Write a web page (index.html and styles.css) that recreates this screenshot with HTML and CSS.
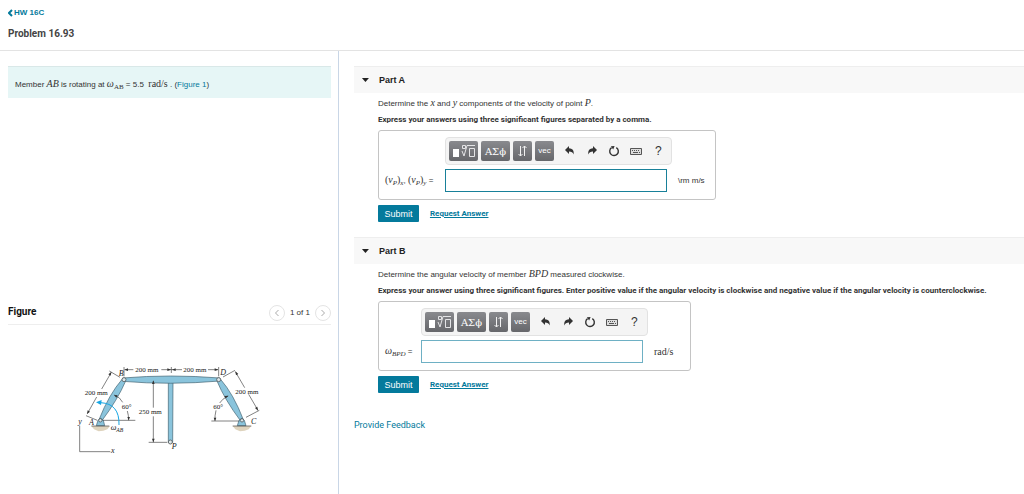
FILE: index.html
```html
<!DOCTYPE html>
<html lang="en">
<head>
<meta charset="utf-8">
<title>Problem 16.93</title>
<link rel="stylesheet" href="styles.css">
</head>
<body>
<svg class="defs" aria-hidden="true">
  <symbol id="i-root" viewBox="0 0 29 20"><path fill="#fff" d="M4 8h6v8H4z"/><path fill="none" stroke="#e4e4e6" d="M13.500 4.500h3v3h-3zM13 10l2 5 3-10.500h8M20.500 7.500h5v8h-5z"/></symbol>
  <symbol id="i-updown" viewBox="0 0 19 20"><path fill="none" stroke="#f2f2f2" d="M7.500 5v10M5.500 13l2 2 2-2M11.500 15V5M9.500 7l2-2 2 2"/></symbol>
  <symbol id="i-undo" viewBox="0 0 10 10"><path fill="#333" d="M4 0v2.300c3.200.1 5.300 2.100 4.600 6.200C7.800 6.300 6.500 5.600 4 5.600V8L0 4z"/></symbol>
  <symbol id="i-redo" viewBox="0 0 10 10"><path fill="#333" d="M6 0v2.300C2.800 2.400.7 4.400 1.400 8.500 2.200 6.300 3.500 5.600 6 5.600V8l4-4z"/></symbol>
  <symbol id="i-reset" viewBox="0 0 12 12"><path fill="none" stroke="#333" stroke-width="1.400" d="M8.300 2.600A4.300 4.300 0 1 1 3.600 2.700"/><path fill="#333" d="M2.800 1.300L6.600 1 5.200 4.500z"/></symbol>
  <symbol id="i-keys" viewBox="0 0 12 8"><path fill="#ddd" stroke="#555" d="M.5 1.500h11v6H.5z"/><path stroke="#555" stroke-dasharray="1 1" d="M2 3.500h8M3 5.500h1M9 5.500h1"/><path stroke="#555" d="M4 5.500h4"/></symbol>
</svg>
<header class="page-head">
  <a class="back" href="#"><svg class="back-icon" viewBox="0 0 5 8"><path d="M4 1L1 4l3 3"/></svg>HW 16C</a>
  <h1 class="title">Problem 16.93</h1>
</header>
<main class="layout">
  <section class="left">
    <p class="intro">Member <i class="math">AB</i> is rotating at <i class="math">ω</i><sub class="math">AB</sub> = 5.5 &nbsp;<span class="math">rad/s</span> . (<a href="#figure">Figure 1</a>)</p>
    <div class="figure-head" id="figure">
      <h2 class="figure-title">Figure</h2>
      <div class="pager">
        <button class="round" aria-label="Previous figure"><svg viewBox="0 0 6 8"><path d="M4.500 1l-3 3 3 3"/></svg></button>
        <span>1 of 1</span>
        <button class="round" aria-label="Next figure"><svg viewBox="0 0 6 8"><path d="M1.500 1l3 3-3 3"/></svg></button>
      </div>
    </div>
    <svg class="drawing" viewBox="0 0 600 330" role="img" aria-label="Linkage A B P D C">
      <g class="ground"><path d="M64 213h56l-8 10-12 4-14 2-14-6z"/><path d="M488 213h56l-8 10-12 4-14 2-14-6z"/></g>
      <g class="member">
        <path d="M295 80h14l-1 182q-7 8-13 0z"/>
        <path d="M158 69Q300 57 450 69v9Q300 91 158 79z"/>
        <path d="M157 72Q117 118 87 194l8 4Q143 134 167 78z"/>
        <path d="M451 72q40 46 69 122l-8 4q-48-64-71-120z"/>
        <path d="M84 196l8-6 8 6 4 16H79zM507 196l8-6 8 6 5 16h-26z"/>
      </g>
      <g class="pin"><circle cx="162" cy="74" r="6"/><circle cx="446" cy="74" r="6"/><circle cx="91" cy="196" r="5"/><circle cx="516" cy="196" r="5"/><circle cx="301" cy="261" r="6"/></g>
      <g class="dim">
        <path d="M64 213h54M488 213h56M162 36v28M304 36v18M446 36v28M164 44h26M274 44h62M414 44h30M118 48l32 19M48 182l34 14M124 52L95 102M80 126L52 176M459 66l36-20M528 187l40-21M496 50l28 48M536 118l28 48M250 78v80M250 184v78M236 262h56M98 196h98M424 198h84M133 120q18 7 25 22M172 168q4 13 4 28M474 123q-18 9-25 21M438 166q-4 16-3 32M29 212v78h92"/>
        <path class="tip" d="M163 44l11-4v8zM303 44l-11-4v8zM306 44l11-4v8zM445 44l-11-4v8zM124 51l-9 7 7 4zM51 177l2-11 7 4zM496 49l9 8-7 4zM564 167l-9-8 7-4zM250 76l-4 11h8zM250 262l-4-11h8zM132 120l11 1-4 7zM176 196l-4-10h8zM476 122l-9 8-4-7zM435 198l-4-10h8z"/>
      </g>
      <path class="spin" d="M147 210q2-64-55-67"/><path class="spin-tip" d="M78 142l17-7-2 15z"/>
      <g class="label">
        <text x="196" y="51">200 mm</text><text x="340" y="51">200 mm</text><text x="44" y="119">200 mm</text><text x="496" y="117">200 mm</text><text x="206" y="177">250 mm</text><text x="155" y="163">60°</text><text x="430" y="162">60°</text>
        <g class="var"><text x="146" y="63">B</text><text x="451" y="61">D</text><text x="57" y="210">A</text><text x="543" y="208">C</text><text x="305" y="281">P</text><text x="25" y="206">y</text><text x="123" y="295">x</text><text x="122" y="225">ω<tspan class="small" dy="5">AB</tspan></text></g>
      </g>
    </svg>
  </section>
  <section class="right">
    <article class="part">
      <header class="part-head"><button class="toggle" aria-label="Collapse Part A"></button><h2>Part A</h2></header>
      <div class="part-body">
        <p class="line">Determine the <i class="math">x</i> and <i class="math">y</i> components of the velocity of point <i class="math">P</i>.</p>
        <p class="line strong">Express your answers using three significant figures separated by a comma.</p>
        <div class="answer">
          <label class="lhs wide" for="ans-a"><span class="math">(<i>v</i><sub><i>P</i></sub>)<sub><i>x</i></sub></span>, <span class="math">(<i>v</i><sub><i>P</i></sub>)<sub><i>y</i></sub></span> =</label>
          <div class="entry">
            <div class="toolbar">
              <button class="tool large" aria-label="Templates"><svg viewBox="0 0 29 20"><use href="#i-root"/></svg></button>
              <button class="tool large greek">ΑΣϕ</button>
              <button class="tool" aria-label="Subscripts"><svg viewBox="0 0 19 20"><use href="#i-updown"/></svg></button>
              <button class="tool">vec</button>
              <button class="plain" aria-label="Undo"><svg class="arrow"><use href="#i-undo"/></svg></button>
              <button class="plain" aria-label="Redo"><svg class="arrow"><use href="#i-redo"/></svg></button>
              <button class="plain" aria-label="Reset"><svg class="reset"><use href="#i-reset"/></svg></button>
              <button class="plain" aria-label="Keyboard shortcuts"><svg class="keys"><use href="#i-keys"/></svg></button>
              <button class="plain">?</button>
            </div>
            <input class="field active" id="ans-a" type="text">
          </div>
          <span class="unit">\rm m/s</span>
        </div>
        <div class="actions"><button class="submit">Submit</button><a class="request" href="#">Request Answer</a></div>
      </div>
    </article>
    <article class="part">
      <header class="part-head"><button class="toggle" aria-label="Collapse Part B"></button><h2>Part B</h2></header>
      <div class="part-body">
        <p class="line">Determine the angular velocity of member <i class="math">BPD</i> measured clockwise.</p>
        <p class="line strong">Express your answer using three significant figures. Enter positive value if the angular velocity is clockwise and negative value if the angular velocity is counterclockwise.</p>
        <div class="answer">
          <label class="lhs" for="ans-b"><i class="math">ω<sub>BPD</sub></i> =</label>
          <div class="entry">
            <div class="toolbar">
              <button class="tool large" aria-label="Templates"><svg viewBox="0 0 29 20"><use href="#i-root"/></svg></button>
              <button class="tool large greek">ΑΣϕ</button>
              <button class="tool" aria-label="Subscripts"><svg viewBox="0 0 19 20"><use href="#i-updown"/></svg></button>
              <button class="tool">vec</button>
              <button class="plain" aria-label="Undo"><svg class="arrow"><use href="#i-undo"/></svg></button>
              <button class="plain" aria-label="Redo"><svg class="arrow"><use href="#i-redo"/></svg></button>
              <button class="plain" aria-label="Reset"><svg class="reset"><use href="#i-reset"/></svg></button>
              <button class="plain" aria-label="Keyboard shortcuts"><svg class="keys"><use href="#i-keys"/></svg></button>
              <button class="plain">?</button>
            </div>
            <input class="field" id="ans-b" type="text">
          </div>
          <span class="unit math">rad/s</span>
        </div>
        <div class="actions"><button class="submit">Submit</button><a class="request" href="#">Request Answer</a></div>
      </div>
    </article>
    <a class="feedback" href="#">Provide Feedback</a>
  </section>
</main>
</body>
</html>
```
FILE: styles.css
```css
* { box-sizing: border-box; }
body { margin: 0; min-height: 100vh; display: flex; flex-direction: column; background: #fff; color: #333; font: 8px/16px "Liberation Sans", Arial, sans-serif; }
h1, h2, p { margin: 0; }
button { padding: 0; border: 0; background: none; color: inherit; font: inherit; display: flex; align-items: center; justify-content: center; }
a { color: #047a9c; text-decoration: none; }
sub { font-size: 7px; line-height: 0; vertical-align: -2px; }
.defs { position: absolute; width: 0; height: 0; }
.math { font-family: "Liberation Serif", "Times New Roman", serif; font-size: 10px; line-height: 0; }
sub.math, .math sub { font-size: 7px; }

.page-head { padding: 5px 8px 8px; border-bottom: 1px solid #e3e3e3; }
.back { display: flex; align-items: center; gap: 1px; font-weight: bold; }
.back-icon { width: 5px; height: 8px; fill: none; stroke: #047a9c; stroke-width: 2; }
.title { margin-top: 5px; font: bold 10px/16px Roboto, sans-serif; color: #444; }

.layout { flex: 1; display: grid; grid-template-columns: 33.1% 1fr; }
.left { padding: 15px 7px 0 8px; border-right: 1px solid #c9d6e6; }
.intro { padding: 10px 7px 5px; border-top: 1px solid #d9e8e8; background: #e6f6f6; }
.figure-head { display: flex; justify-content: space-between; margin-top: 204px; height: 23px; border-bottom: 1px solid #eee; }
.figure-title { font: bold 10px/20px Roboto, sans-serif; color: #111; }
.pager { display: flex; align-items: center; gap: 5px; }
.round { width: 16px; height: 16px; border: 1px solid #e4e4e4; border-radius: 50%; }
.round svg { width: 6px; height: 8px; fill: none; stroke: #aaa; }

.drawing { display: block; width: 200px; height: 110px; margin: 30px 0 0 62px; }
.ground { fill: #ded3bd; }
.member { fill: #8ac4dc; stroke: #3f6170; stroke-width: 2; }
.pin { fill: #dce8ec; stroke: #444; stroke-width: 2; }
.dim { fill: none; stroke: #444; stroke-width: 2; }
.dim .tip { fill: #333; stroke: none; }
.spin { fill: none; stroke: #16a6e4; stroke-width: 3; }
.spin-tip { fill: #16a6e4; }
.label { font: 21px "Liberation Serif", serif; fill: #222; }
.var { font-size: 24px; font-style: italic; }
.small { font-size: 17px; }

.right { min-width: 0; padding: 15px 0 0 15px; }
.part { margin-bottom: 15px; }
.part-head { display: flex; align-items: center; gap: 10px; height: 27px; padding-left: 8px; background: #f8f8f8; border-top: 1px solid #eee; }
.part-head h2 { font-size: 9px; color: #222; }
.toggle { width: 7px; height: 4px; background: #222; clip-path: polygon(0 0, 100% 0, 50% 100%); }
.part-body { padding: 3px 0 0 24px; }
.line { line-height: 16px; }
.strong { font-family: Roboto, sans-serif; font-weight: bold; }
.answer { display: flex; align-items: flex-end; width: fit-content; height: 70px; margin-top: 2px; padding: 6px 10px 7px 6px; border: 1px solid #c4c4c4; border-radius: 3px; }
.lhs, .unit { line-height: 23px; }
.lhs { width: 36px; white-space: nowrap; }
.lhs.wide { width: 60px; }
.unit { margin-left: 6px; min-width: 26px; }
.entry { display: flex; flex-direction: column; gap: 4px; }
.toolbar { display: flex; align-items: center; gap: 3px; height: 28px; width: 227px; padding: 0 3px; border: 1px solid #e2e2e2; border-radius: 4px; background: #f4f4f4; }
.tool { width: 19px; height: 20px; border-radius: 2px; background: linear-gradient(#898a8e, #66676b); color: #fff; }
.tool svg { width: 100%; height: 20px; }
.large { width: 29px; }
.greek { font: 10px "DejaVu Serif", serif; }
.plain { width: 19px; height: 20px; font-size: 12px; }
.tool + .plain { margin-left: 4px; }
.arrow { width: 10px; height: 10px; }
.reset { width: 12px; height: 12px; }
.keys { width: 12px; height: 8px; }
.field { width: 222px; height: 23px; border: 1px solid #6eb0c4; background: #fff; padding: 2px 4px; }
.field.active { border-color: #188099; }
.actions { display: flex; align-items: center; gap: 11px; margin-top: 5px; }
.submit { width: 41px; height: 17px; border-radius: 1px; background: #047a9c; color: #fff; font-size: 9px; }
.request { font-family: Roboto, sans-serif; font-weight: bold; text-decoration: underline; }
.feedback { display: block; width: fit-content; margin-top: 24px; font: 9px/16px Roboto, sans-serif; }
```
